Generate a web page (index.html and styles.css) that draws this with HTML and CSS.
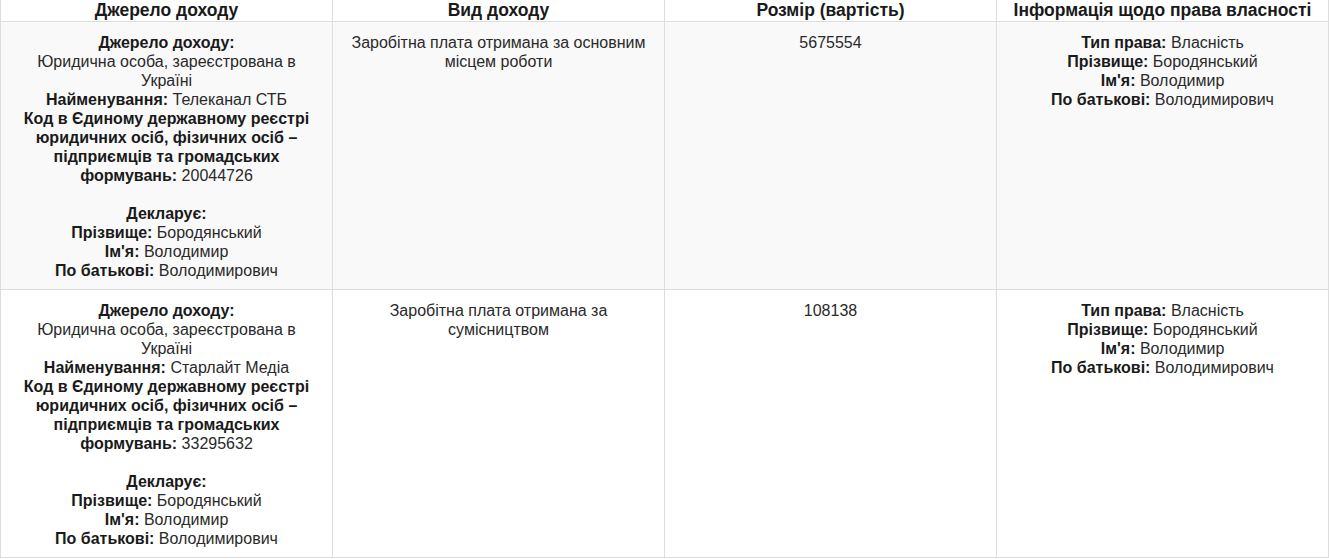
FILE: index.html
```html
<!DOCTYPE html>
<html lang="uk">
<head>
<meta charset="utf-8">
<link rel="stylesheet" href="styles.css">
</head>
<body>
<table class="income">
  <thead>
    <tr>
      <th>Джерело доходу</th>
      <th>Вид доходу</th>
      <th>Розмір (вартість)</th>
      <th>Інформація щодо права власності</th>
    </tr>
  </thead>
  <tbody>
    <tr class="odd">
      <td>
        <b>Джерело доходу:</b><br>Юридична особа, зареєстрована в Україні<br>
        <b>Найменування:</b> Телеканал СТБ<br>
        <b>Код в Єдиному державному реєстрі юридичних осіб, фізичних осіб – підприємців та громадських формувань:</b> 20044726<br><br>
        <b>Декларує:</b><br>
        <b>Прізвище:</b> Бородянський<br>
        <b>Ім'я:</b> Володимир<br>
        <b>По батькові:</b> Володимирович
      </td>
      <td>Заробітна плата отримана за основним місцем роботи</td>
      <td>5675554</td>
      <td>
        <b>Тип права:</b> Власність<br>
        <b>Прізвище:</b> Бородянський<br>
        <b>Ім'я:</b> Володимир<br>
        <b>По батькові:</b> Володимирович
      </td>
    </tr>
    <tr>
      <td>
        <b>Джерело доходу:</b><br>Юридична особа, зареєстрована в Україні<br>
        <b>Найменування:</b> Старлайт Медіа<br>
        <b>Код в Єдиному державному реєстрі юридичних осіб, фізичних осіб – підприємців та громадських формувань:</b> 33295632<br><br>
        <b>Декларує:</b><br>
        <b>Прізвище:</b> Бородянський<br>
        <b>Ім'я:</b> Володимир<br>
        <b>По батькові:</b> Володимирович
      </td>
      <td>Заробітна плата отримана за сумісництвом</td>
      <td>108138</td>
      <td>
        <b>Тип права:</b> Власність<br>
        <b>Прізвище:</b> Бородянський<br>
        <b>Ім'я:</b> Володимир<br>
        <b>По батькові:</b> Володимирович
      </td>
    </tr>
  </tbody>
</table>
</body>
</html>
```

FILE: styles.css
```css
html, body {
  margin: 0;
  padding: 0;
  background: #fff;
}
body {
  font-family: "Liberation Sans", Arial, sans-serif;
  font-size: 16px;
  line-height: 19px;
  color: #2a2a2a;
}
.income {
  width: 100%;
  border-collapse: collapse;
  table-layout: fixed;
}
.income th,
.income td {
  border: 1px solid #ddd;
  text-align: center;
  vertical-align: top;
  padding: 11px 12px 9px;
}
.income th {
  font-size: 17.5px;
  font-weight: bold;
  color: #1a1a1a;
  line-height: 21px;
  padding: 0 8px;
  border-top: none;
}
.income b {
  color: #1a1a1a;
}
.income tr.odd td {
  background: #f9f9f9;
}
```
